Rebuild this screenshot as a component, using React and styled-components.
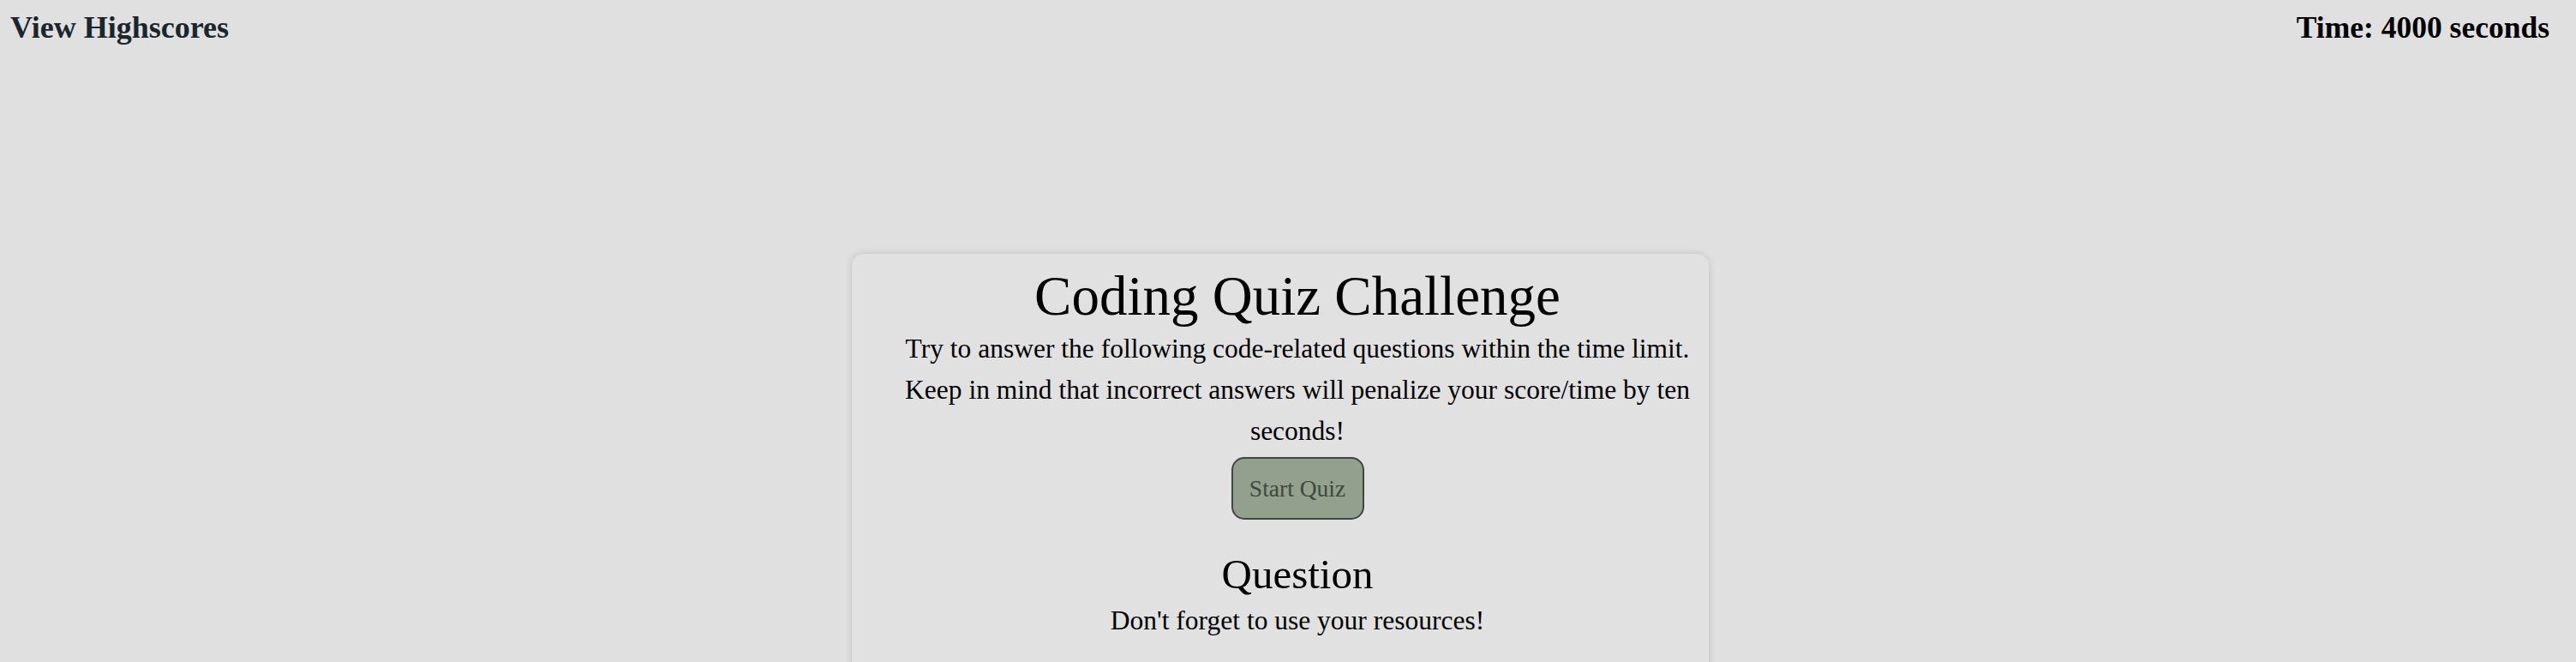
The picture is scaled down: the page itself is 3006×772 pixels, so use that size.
import React from 'react'
import styled, { createGlobalStyle } from 'styled-components'

const Global = createGlobalStyle`
  html, body {
    margin: 0;
    background: #e0e0e0;
    font-family: "Liberation Serif", "Times New Roman", serif;
  }
`

const Page = styled.div`
  height: 772px;
  background: #e0e0e0;
  overflow: hidden;
`

const Header = styled.header`
  display: flex;
  justify-content: space-between;
  align-items: center;
  padding: 16px 31px 0 12px;
  height: 32px;
`

const NavLink = styled.a`
  font-size: ${p => p.$size || 35}px;
  line-height: 32px;
  font-weight: bold;
  color: ${p => p.$dark ? '#000' : '#1b262c'};
  text-decoration: none;
`

const Main = styled.main`
  display: flex;
  justify-content: center;
  padding-right: 18px;
  margin-top: 248px;
`

const Card = styled.section`
  width: 1000px;
  box-sizing: border-box;
  padding: 17px 5px 120px 45px;
  border-radius: 14px;
  background: #e1e1e1;
  box-shadow: 0 0 9px rgba(0, 0, 0, 0.14);
  display: flex;
  flex-direction: column;
  align-items: center;
  text-align: center;
`

const Title = styled.h1`
  margin: 0;
  font-size: 65px;
  line-height: 64px;
  font-weight: normal;
  color: #000;
`

const Intro = styled.p`
  margin: 6px 0 0;
  font-size: 31.5px;
  line-height: 48px;
  color: #000;
`

const StartButton = styled.button`
  margin-top: 6px;
  width: 155px;
  height: 73px;
  box-sizing: border-box;
  border: 2px solid #3e493e;
  border-radius: 15px;
  background: #93a08e;
  color: #3e493e;
  font-family: inherit;
  font-size: 27.5px;
  cursor: pointer;
`

const Question = styled.h2`
  margin: 40px 0 0;
  font-size: 49px;
  line-height: 48px;
  font-weight: normal;
  color: #000;
`

const Hint = styled.p`
  margin: 12px 0 0;
  font-size: 31.5px;
  line-height: 36px;
  color: #000;
`

export default function App() {
  return (
    <Page>
      <Global />
      <Header>
        <NavLink href="#" $size={36}>View Highscores</NavLink>
        <NavLink as="span" $dark $size={35.5}>Time: 4000 seconds</NavLink>
      </Header>
      <Main>
        <Card>
          <Title>Coding Quiz Challenge</Title>
          <Intro>
            Try to answer the following code-related questions within the time limit.
            Keep in mind that incorrect answers will penalize your score/time by ten seconds!
          </Intro>
          <StartButton>Start Quiz</StartButton>
          <Question>Question</Question>
          <Hint>Don't forget to use your resources!</Hint>
        </Card>
      </Main>
    </Page>
  )
}
